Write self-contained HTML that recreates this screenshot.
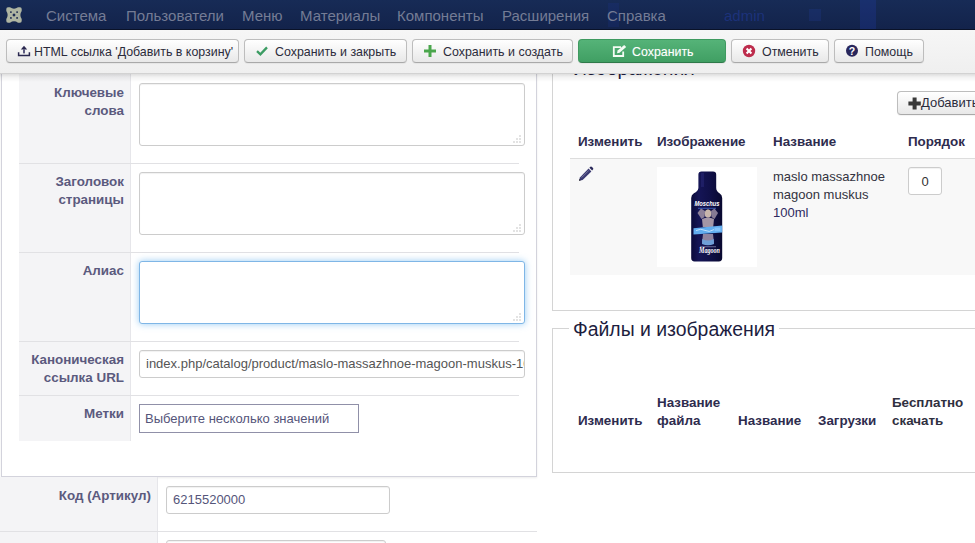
<!DOCTYPE html>
<html lang="ru">
<head>
<meta charset="utf-8">
<title>Joomla</title>
<style>
html,body{margin:0;padding:0;}
body{width:975px;height:543px;overflow:hidden;position:relative;background:#fff;font-family:"Liberation Sans",Arial,sans-serif;font-size:13px;color:#333;}
.abs{position:absolute;}
#nav{left:0;top:0;width:975px;height:30px;background:linear-gradient(#172b56,#13234b);border-bottom:1px solid #0a1228;box-sizing:border-box;}
#nav span{position:absolute;top:6px;font-size:15px;line-height:19px;color:#747c95;white-space:nowrap;}
#sub{left:0;top:30px;width:975px;height:44px;background:linear-gradient(#f6f6f6,#efefef);border-bottom:1px solid #d2d2d2;box-sizing:border-box;z-index:5;}
#subsh{left:0;top:74px;width:975px;height:8px;background:linear-gradient(rgba(0,0,0,.13),rgba(0,0,0,.05) 40%,rgba(0,0,0,0));z-index:5;}
.btn{position:absolute;top:39px;height:24px;box-sizing:border-box;border:1px solid #bdbdbd;border-bottom-color:#a9a9a9;border-radius:4px;background:linear-gradient(#ffffff,#e8e8e8);font-size:12.4px;line-height:22px;color:#2b2b3b;white-space:nowrap;z-index:6;box-shadow:0 1px 1px rgba(0,0,0,.05);}
.btn span{position:absolute;top:1px;}
.lbl{position:absolute;font-weight:bold;font-size:13.4px;line-height:18px;color:#5b5a7e;text-align:right;white-space:nowrap;}
.ta{position:absolute;box-sizing:border-box;border:1px solid #ccc;border-radius:3px;background:#fff;box-shadow:inset 0 1px 1px rgba(0,0,0,.06);}
.hr{position:absolute;height:1px;background:#e1e1e4;}
.th{position:absolute;font-weight:bold;font-size:13.4px;line-height:18px;color:#2e2c4e;white-space:nowrap;}
</style>
</head>
<body>
<!-- NAVBAR -->
<div id="nav" class="abs">
<svg class="abs" style="left:6px;top:7px" width="16" height="16" viewBox="0 0 16 16"><path d="M0.3 2 Q0.3 0.3 2 0.3 L4 0.3 Q8 3.2 12 0.3 L14 0.3 Q15.7 0.3 15.7 2 L15.7 4 Q13 8 15.7 12 L15.7 14 Q15.7 15.7 14 15.7 L12 15.7 Q8 12.8 4 15.7 L2 15.7 Q0.3 15.7 0.3 14 L0.3 12 Q3 8 0.3 4 Z" fill="#afb5a2"/><g fill="#1a2850"><rect x="6.8" y="6.8" width="2.4" height="2.4" transform="rotate(45 8 8)"/><circle cx="4.9" cy="5.1" r="0.95"/><circle cx="11.1" cy="5.1" r="0.95"/><circle cx="4.9" cy="10.9" r="0.95"/><circle cx="11.1" cy="10.9" r="0.95"/></g></svg>
<div class="abs" style="left:860px;top:0;width:16px;height:29px;background:rgba(40,70,220,.18)"></div><div class="abs" style="left:608px;top:3px;width:11px;height:24px;background:rgba(40,70,220,.1)"></div>
<span style="left:724px;color:rgba(45,75,215,.32)">admin</span><div class="abs" style="left:809px;top:9px;width:12px;height:12px;background:rgba(45,75,215,.14)"></div>
<span style="left:46px">Система</span>
<span style="left:126px">Пользователи</span>
<span style="left:242px">Меню</span>
<span style="left:300px">Материалы</span>
<span style="left:397px">Компоненты</span>
<span style="left:502px">Расширения</span>
<span style="left:607px">Справка</span>
</div>
<!-- TOOLBAR -->
<div id="sub" class="abs"></div><div id="subsh" class="abs"></div>
<div class="btn" style="left:6px;width:233px"><span style="left:27px">HTML ссылка 'Добавить в корзину'</span></div>
<div class="btn" style="left:244px;width:163px"><span style="left:30px">Сохранить и закрыть</span></div>
<div class="btn" style="left:412px;width:161px"><span style="left:30px">Сохранить и создать</span></div>
<div class="btn" style="left:578px;width:148px;background:linear-gradient(#55b378,#409f63);border-color:#3f9a60;border-bottom-color:#2f7a4a;color:#fff;text-shadow:0 0 1px rgba(255,255,255,.3)"><span style="left:53px">Сохранить</span></div>
<div class="btn" style="left:731px;width:98px"><span style="left:30px">Отменить</span></div>
<div class="btn" style="left:834px;width:90px"><span style="left:30px">Помощь</span></div>
<!-- toolbar icons -->
<svg class="abs" style="left:17px;top:45px;z-index:7" width="14" height="12" viewBox="0 0 14 12"><path d="M7 0.8 L10.2 4.4 H3.8 Z" fill="#2a2850"/><rect x="6" y="4.2" width="2" height="4.2" fill="#5c5b80"/><path d="M1.6 7.2 V10.4 H12.4 V7.2" fill="none" stroke="#2a2850" stroke-width="1.5"/></svg>
<svg class="abs" style="left:255px;top:45px;z-index:7" width="14" height="12" viewBox="0 0 14 12"><path d="M2 6.2 L5.4 9.4 L12 2.4" fill="none" stroke="#3c9c63" stroke-width="2.3"/></svg>
<svg class="abs" style="left:423px;top:44px;z-index:7" width="14" height="14" viewBox="0 0 14 14"><path d="M7 1 V13 M1 7 H13" fill="none" stroke="#4aa64c" stroke-width="3"/></svg>
<svg class="abs" style="left:612px;top:44px;z-index:7" width="16" height="14" viewBox="0 0 16 14"><path d="M9 3.2 H1.8 V12 H11.2 V7.5" fill="none" stroke="#f4fbf4" stroke-width="1.8"/><path d="M5 9.2 L5.6 6.6 L12.2 1 L14.2 3 L7.6 8.8 Z" fill="#f4fbf4"/></svg>
<svg class="abs" style="left:742px;top:44px;z-index:7" width="14" height="14" viewBox="0 0 14 14"><circle cx="7" cy="7" r="6.2" fill="#bd2c4c"/><path d="M4.6 4.6 L9.4 9.4 M9.4 4.6 L4.6 9.4" stroke="#fff" stroke-width="2.1" fill="none"/></svg>
<svg class="abs" style="left:845px;top:44px;z-index:7" width="14" height="14" viewBox="0 0 14 14"><circle cx="7" cy="6.8" r="6" fill="#28265c"/><text x="7" y="10.6" font-family="Liberation Sans, sans-serif" font-weight="bold" font-size="10.5" fill="#fff" text-anchor="middle">?</text></svg>

<!-- LEFT PANEL -->
<div class="abs" style="left:1px;top:60px;width:536px;height:417px;box-sizing:border-box;border:1px solid #d3d3dc;border-top:none;background:#fff;box-shadow:0 1px 2px rgba(0,0,0,.08)"></div>
<div class="abs" style="left:19px;top:74px;width:112px;height:367px;background:#f4f4f6;border-right:1px solid #e6e6ea;box-sizing:border-box"></div>
<div class="hr" style="left:19px;top:163px;width:500px"></div>
<div class="hr" style="left:19px;top:252px;width:500px"></div>
<div class="hr" style="left:19px;top:341px;width:500px"></div>
<div class="hr" style="left:19px;top:395px;width:500px"></div>
<div class="lbl" style="right:851px;top:84px">Ключевые<br>слова</div>
<div class="lbl" style="right:851px;top:173px">Заголовок<br>страницы</div>
<div class="lbl" style="right:851px;top:262px">Алиас</div>
<div class="lbl" style="right:851px;top:351px">Каноническая<br>ссылка URL</div>
<div class="lbl" style="right:851px;top:405px">Метки</div>
<div class="ta" style="left:139px;top:83px;width:386px;height:63px"></div>
<div class="ta" style="left:139px;top:172px;width:386px;height:63px"></div>
<div class="ta" style="left:139px;top:261px;width:386px;height:63px;border-color:#7fb6e6;box-shadow:0 0 7px rgba(82,168,236,.6)"></div>
<div class="ta" style="left:139px;top:350px;width:386px;height:28px;overflow:hidden"><span class="abs" style="left:6px;top:4px;line-height:18px;white-space:nowrap;color:#555">index.php/catalog/product/maslo-massazhnoe-magoon-muskus-100ml</span></div>
<div class="abs" style="left:139px;top:404px;width:220px;height:29px;box-sizing:border-box;border:1px solid #9090a8;background:#fff"><span class="abs" style="left:5px;top:5px;line-height:18px;white-space:nowrap;color:#55557a">Выберите несколько значений</span></div>

<svg class="abs" style="left:513px;top:135px" width="9" height="9" viewBox="0 0 9 9"><g fill="#8f8f8f"><rect x="6.5" y="0.5" width="1" height="1"/><rect x="3.5" y="3.5" width="1" height="1"/><rect x="6.5" y="3.5" width="1" height="1"/><rect x="0.5" y="6.5" width="1" height="1"/><rect x="3.5" y="6.5" width="1" height="1"/><rect x="6.5" y="6.5" width="1" height="1"/></g></svg>
<svg class="abs" style="left:513px;top:224px" width="9" height="9" viewBox="0 0 9 9"><g fill="#8f8f8f"><rect x="6.5" y="0.5" width="1" height="1"/><rect x="3.5" y="3.5" width="1" height="1"/><rect x="6.5" y="3.5" width="1" height="1"/><rect x="0.5" y="6.5" width="1" height="1"/><rect x="3.5" y="6.5" width="1" height="1"/><rect x="6.5" y="6.5" width="1" height="1"/></g></svg>
<svg class="abs" style="left:513px;top:313px" width="9" height="9" viewBox="0 0 9 9"><g fill="#8f8f8f"><rect x="6.5" y="0.5" width="1" height="1"/><rect x="3.5" y="3.5" width="1" height="1"/><rect x="6.5" y="3.5" width="1" height="1"/><rect x="0.5" y="6.5" width="1" height="1"/><rect x="3.5" y="6.5" width="1" height="1"/><rect x="6.5" y="6.5" width="1" height="1"/></g></svg>
<!-- BELOW LEFT PANEL -->
<div class="abs" style="left:0;top:477px;width:158px;height:66px;background:#f4f4f6;border-right:1px solid #e6e6ea;box-sizing:border-box"></div>
<div class="hr" style="left:0;top:531px;width:537px"></div>
<div class="lbl" style="right:824px;top:487px">Код (Артикул)</div>
<div class="ta" style="left:166px;top:486px;width:224px;height:28px"><span class="abs" style="left:6px;top:4px;line-height:18px;color:#55557a">6215520000</span></div>
<div class="ta" style="left:166px;top:540px;width:220px;height:30px"></div>

<!-- RIGHT PANEL 1 -->
<div class="abs" style="left:552px;top:50px;width:440px;height:261px;box-sizing:border-box;border:1px solid #d4d4d4;background:#fff"></div>
<div class="abs" style="left:573px;top:56px;font-size:19.4px;line-height:24px;color:#1d1d40;white-space:nowrap">Изображения</div>
<div class="btn" style="left:897px;top:91px;width:90px;height:24px;line-height:22px;font-size:13px;z-index:1"><span style="left:23px;top:0">Добавить</span></div>
<svg class="abs" style="left:908px;top:97px;z-index:2" width="14" height="13" viewBox="0 0 14 13"><path d="M6.6 0.6 V12.6 M0.4 6.6 H12.8" stroke="#383838" stroke-width="4" fill="none"/></svg>
<div class="th" style="left:578px;top:133px">Изменить</div>
<div class="th" style="left:657px;top:133px">Изображение</div>
<div class="th" style="left:773px;top:133px">Название</div>
<div class="th" style="left:908px;top:133px">Порядок</div>
<div class="hr" style="left:570px;top:158px;width:405px;background:#ddd"></div>
<div class="abs" style="left:570px;top:159px;width:405px;height:116px;background:#f8f8f8"></div>
<svg class="abs" style="left:577px;top:165px" width="18" height="18" viewBox="0 0 18 18"><path d="M2 15.8 L2.9 12.4 L11.6 3.6 L14.4 6.4 L5.6 15 Z" fill="#3b3a72"/><path d="M12.4 2.8 L13.4 1.8 Q14.2 1.2 15 2 L16 3 Q16.7 3.8 16 4.6 L15.1 5.5 Z" fill="#2c2b5c"/><path d="M4.6 12.6 L11.8 5.4" stroke="#77769c" stroke-width="1" fill="none"/><path d="M2 15.8 L2.5 13.9 L3.9 15.3 Z" fill="#222"/></svg>
<svg class="abs" style="left:657px;top:167px" width="100" height="100" viewBox="0 0 100 100">
<rect width="100" height="100" fill="#fff"/>
<defs><linearGradient id="bg1" x1="0" x2="1" y1="0" y2="0"><stop offset="0" stop-color="#0b0b3a"/><stop offset=".25" stop-color="#151556"/><stop offset=".6" stop-color="#101048"/><stop offset="1" stop-color="#090930"/></linearGradient></defs>
<path d="M41.4 7.5 Q41.4 4.4 44.5 4.4 H56 Q59.2 4.4 59.2 7.5 V21 Q59.4 24.5 62.5 26.2 Q65.2 27.6 65.2 31 V91 Q65.2 94.4 61.8 94.4 H37.6 Q34.2 94.4 34.2 91 V31 Q34.2 27.6 36.9 26.2 Q40.9 24.5 41.4 21 Z" fill="url(#bg1)"/>
<rect x="44" y="6" width="3" height="14" fill="#2a2a7a" opacity=".5"/>
<!-- figure -->
<path d="M40.5 46 L44 41.5 L48 44 L47.5 50 L44.5 52 Z" fill="#8d819a"/>
<path d="M61 46 L57.5 41.5 L54 44 L54.5 50 L57.5 52 Z" fill="#857a94"/>
<ellipse cx="51" cy="46.8" rx="3.3" ry="4" fill="#c8b6ac"/>
<path d="M47.6 44.5 Q51 40.5 54.4 44.5 Q53 42.8 51 43 Q49 42.8 47.6 44.5 Z" fill="#e8d9a8"/>
<path d="M45 52 Q51 49.5 57 52 L56.2 60 H45.8 Z" fill="#a496a6"/>
<path d="M46 67 H56 L57 76 Q51 78 45 76 Z" fill="#8f84a0"/>
<path d="M45.2 72 Q51 75 56.8 72 L57 77 Q51 79.5 45 77 Z" fill="#6f9fd8"/>
<!-- banner -->
<path d="M36.5 61.2 L65.2 58.6 V65.6 L36.5 67.6 Z" fill="#62adef"/>
<path d="M39 63.6 Q44 61 48 63.4 T57 62.6" stroke="#c9e6ff" stroke-width=".9" fill="none"/>
<rect x="57.5" y="60.6" width="6" height="3.6" fill="#8cc8ff" opacity=".8"/>
<text x="50" y="39" font-family="Liberation Sans, sans-serif" font-style="italic" font-weight="bold" font-size="6.6" fill="#fff" text-anchor="middle" textLength="25" lengthAdjust="spacingAndGlyphs">Moschus</text>
<rect x="41" y="40.8" width="18" height="0.9" fill="#4f78d8" opacity=".8"/>
<rect x="43" y="79.4" width="16" height="0.8" fill="#cfd4f0" opacity=".6"/>
<text x="52.5" y="85.6" font-family="Liberation Serif, serif" font-style="italic" font-weight="bold" font-size="8" fill="#fff" text-anchor="middle" textLength="21" lengthAdjust="spacingAndGlyphs">Magoon</text>
</svg>
<div class="abs" style="left:773px;top:168px;line-height:18px;color:#333340">maslo massazhnoe<br>magoon muskus<br><span style="color:#2e2a60">100ml</span></div>
<div class="ta" style="left:908px;top:167px;width:34px;height:28px;text-align:center;line-height:27px;color:#333">0</div>

<!-- RIGHT PANEL 2 -->
<div class="abs" style="left:552px;top:328px;width:440px;height:145px;box-sizing:border-box;border:1px solid #d4d4d4;background:#fff"></div>
<div class="abs" style="left:569px;top:317px;padding:0 4px;background:#fff;font-size:19.4px;line-height:24px;color:#1d1d40;white-space:nowrap">Файлы и изображения</div>
<div class="th" style="left:578px;top:412px">Изменить</div>
<div class="th" style="left:657px;top:394px">Название<br>файла</div>
<div class="th" style="left:738px;top:412px">Название</div>
<div class="th" style="left:818px;top:412px">Загрузки</div>
<div class="th" style="left:892px;top:394px;color:#303040">Бесплатно<br>скачать</div>
</body>
</html>
